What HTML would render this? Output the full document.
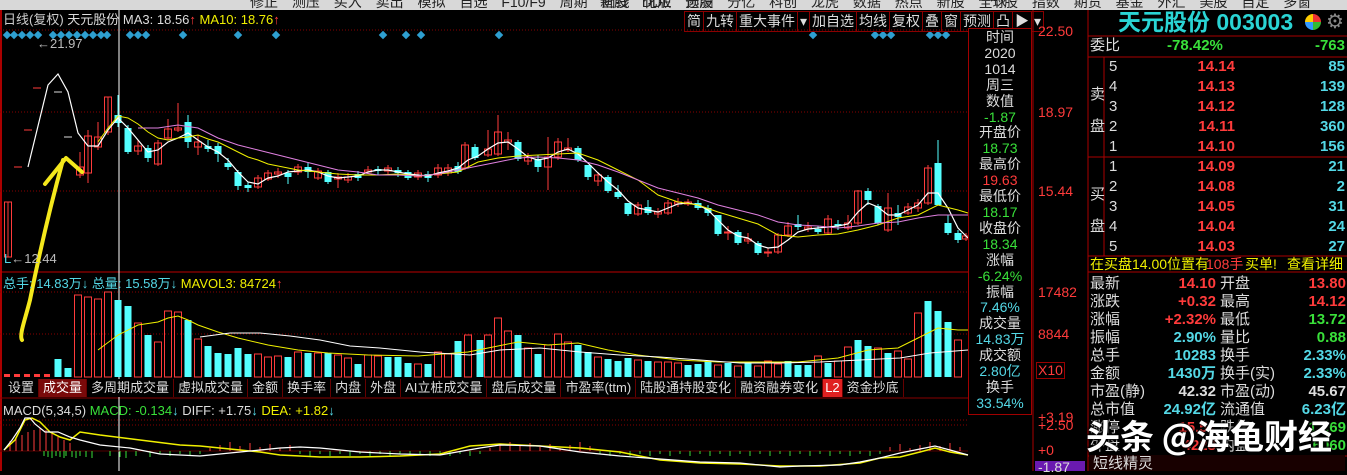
<!DOCTYPE html>
<html><head><meta charset="utf-8">
<style>
*{margin:0;padding:0;box-sizing:border-box}
body{width:1347px;height:471px;background:#000;overflow:hidden;position:relative;font-family:"Liberation Sans","Noto Sans CJK SC",sans-serif;}
.a{position:absolute;white-space:nowrap}
.tb{position:absolute;left:0;top:0;width:1347px;height:10px;background:#d8d8d8;overflow:hidden}
.tb span{position:absolute;top:-8px;font-size:14px;color:#222;word-spacing:10px}
.t{font-size:13px;line-height:15px}
.r{color:#ff3b3b}.g{color:#39e03a}.c{color:#54d8e6}.y{color:#f0f000}.w{color:#ddd}
.rp{position:absolute;left:1089px;width:258px;font-size:15px;line-height:18px}
.row{position:absolute;left:0;width:256px;height:18px}
.row span{position:absolute;top:0}
.tabs{position:absolute;left:4px;top:379px;height:18px;font-size:13px;line-height:18px}
.tabs span{display:inline-block;padding:0 4px;color:#ddd;border-right:1px solid #600;background:#000}
.tb2{position:absolute;left:684px;top:11px;height:19px;font-size:14px;line-height:19px;color:#ddd}
.tb2 span{display:inline-block;padding:0 2px;border:1px solid #8a0000;margin-right:-1px}
.pop{position:absolute;left:968px;top:28px;width:64px;height:387px;border:1px solid #a00000;background:#000;text-align:center;font-size:14px;line-height:15.9px;padding-top:1px}
</style></head><body>
<div class="tb">
<span style="left:250px">修正 测压 买入 卖出 模拟 自选 F10/F9 周期 画线 化版 选股</span>
<span style="left:600px">新股 DDE 预测 分亿 科创 龙虎 数据 热点 新股 全球</span>
<span style="left:990px">个股 指数 期货 基金 外汇 美股 自定 多窗</span>
</div>
<svg class="a" style="left:0;top:0" width="1347" height="471" id="sv"></svg>
<div class="a t" style="left:3px;top:12px;color:#ccc">日线(复权) <span class="w">天元股份</span> <span class="w">MA3: 18.56</span><span class="r">↑</span> <span class="y">MA10: 18.76</span><span class="r">↑</span></div>
<div class="a t" style="left:37px;top:36px;color:#bbb">←21.97</div>
<div class="a t" style="left:4px;top:251px;color:#bbb"><span class="c">L</span>←12.44</div>
<div class="a t" style="left:3px;top:276px"><span class="c">总手: 14.83万</span><span class="c">↓</span> <span class="c">总量: 15.58万↓</span> <span class="y">MAVOL3: 84724</span><span class="r">↑</span></div>
<div class="a t" style="left:3px;top:403px"><span class="w">MACD(5,34,5)</span> <span class="g">MACD: -0.134</span><span class="c">↓</span> <span class="w">DIFF: +1.75</span><span class="c">↓</span> <span class="y">DEA: +1.82</span><span class="c">↓</span></div>
<div class="tb2"><span>简</span><span>九转</span><span>重大事件</span><span>▾</span><span>加自选</span><span>均线</span><span>复权</span><span>叠</span><span>窗</span><span>预测</span><span>凸</span><span>▶</span><span>▾</span></div>
<div class="tabs"><span>设置</span><span style="background:#7a0a0a;color:#fff">成交量</span><span>多周期成交量</span><span>虚拟成交量</span><span>金额</span><span>换手率</span><span>内盘</span><span>外盘</span><span>AI立桩成交量</span><span>盘后成交量</span><span>市盈率(ttm)</span><span>陆股通持股变化</span><span>融资融券变化</span><span style="background:#e02020;color:#fff;padding:0 2px">L2</span><span>资金抄底</span></div>
<div class="pop">
<div class="w">时间</div><div class="w">2020</div><div class="w">1014</div><div class="w">周三</div><div class="w">数值</div><div class="g">-1.87</div>
<div class="w">开盘价</div><div class="g">18.73</div><div class="w">最高价</div><div class="r">19.63</div><div class="w">最低价</div><div class="g">18.17</div><div class="w">收盘价</div><div class="g">18.34</div>
<div class="w">涨幅</div><div class="g">-6.24%</div><div class="w">振幅</div><div class="c">7.46%</div><div class="w">成交量</div><div class="c">14.83万</div><div class="w">成交额</div><div class="c">2.80亿</div><div class="w">换手</div><div class="c">33.54%</div>
</div>
<div class="a t r" style="left:1038px;top:24px;font-size:14px">22.50</div>
<div class="a t r" style="left:1038px;top:105px;font-size:14px">18.97</div>
<div class="a t r" style="left:1038px;top:184px;font-size:14px">15.44</div>
<div class="a t r" style="left:1038px;top:285px;font-size:14px">17482</div>
<div class="a t r" style="left:1038px;top:327px;font-size:14px">8844</div>
<div class="a t r" style="left:1036px;top:362px;font-size:14px;border:1px solid #900;padding:0 1px">X10</div>
<div class="a t r" style="left:1038px;top:410px;font-size:14px">+3.19</div>
<div class="a t r" style="left:1038px;top:418px;font-size:14px">+2.50</div>
<div class="a t r" style="left:1038px;top:443px;font-size:14px">+0</div>
<div class="a t" style="left:1035px;top:461px;width:50px;height:10px;background:#6a1ab0;color:#ddd;font-size:14px;line-height:13px;padding-left:3px">-1.87</div>
<div class="a" style="left:1118px;top:9px;font-size:23px;color:#2ad4d4;font-weight:bold;line-height:26px">天元股份 003003</div>
<div class="a" style="left:1305px;top:14px;width:16px;height:16px;border-radius:50%;background:conic-gradient(#e33 0 25%,#3b3 0 50%,#39f 0 75%,#fc0 0)"></div>
<div class="a" style="left:1326px;top:9px;font-size:20px;color:#888">⚙</div>
<div class="rp" style="top:0">
<div class="row" style="top:37px"><span class="w" style="left:1px">委比</span><span class="g" style="left:78px;font-weight:bold">-78.42%</span><span class="g" style="right:0;font-weight:bold">-763</span></div>
<div class="a w" style="left:1px;top:86px">卖</div><div class="a w" style="left:1px;top:118px">盘</div>
<div class="a w" style="left:1px;top:186px">买</div><div class="a w" style="left:1px;top:218px">盘</div>
</div>
<div id="ob"></div>
<div class="rp" style="top:0">
<div class="row" style="top:255px;font-size:14px"><span class="y" style="left:1px">在买盘14.00位置有</span><span class="r" style="left:117px">108手</span><span class="y" style="left:156px">买单!</span><span class="y" style="right:2px">查看详细</span></div>
</div>
<div id="st"></div>
<div class="rp" style="top:0"><div class="row" style="top:455px;height:16px;background:#180000"><span class="w" style="left:4px">短线精灵</span></div></div>
<div class="a" style="left:1086px;top:410px;font-size:34px;font-weight:bold;color:#fff;text-shadow:0 0 2px #000,1px 1px 2px #000,-1px -1px 2px #000;font-family:'Noto Sans CJK SC',sans-serif">头条 @海龟财经</div>
<script>
var S='';
function L(x1,y1,x2,y2,c,w,d){S+='<line x1="'+x1+'" y1="'+y1+'" x2="'+x2+'" y2="'+y2+'" stroke="'+c+'" stroke-width="'+(w||1)+'"'+(d?' stroke-dasharray="'+d+'"':'')+'/>';}
function R(x,y,w,h,c,f){S+='<rect x="'+x+'" y="'+y+'" width="'+w+'" height="'+Math.max(h,1)+'" '+(f?'fill="'+c+'"':'fill="none" stroke="'+c+'"')+'/>';}
function P(pts,c,w){S+='<polyline points="'+pts+'" fill="none" stroke="'+c+'" stroke-width="'+(w||1)+'"/>';}
var RD='#ff3b3b',CY='#54ffff';
L(1,10,1,471,'#a00',2);
L(0,30,968,30,'#800',1,'1 2');
L(0,112,968,112,'#800',1,'1 2');L(0,191,968,191,'#800',1,'1 2');
L(0,272,968,272,'#b00',1);
L(0,292,968,292,'#800',1,'1 2');L(0,334,968,334,'#800',1,'1 2');
L(0,398,968,398,'#800',1);L(0,420,968,420,'#800',1,'1 2');L(0,425,968,425,'#800',1,'1 2');
L(1033,10,1033,471,'#a00',1);L(1088,10,1088,471,'#a00',1);
L(1088,36,1347,36,'#a00',1);L(1088,57,1347,57,'#a00',1);L(1088,157,1347,157,'#a00',1);L(1088,256,1347,256,'#a00',1);L(1088,272,1347,272,'#a00',1);L(1104,57,1104,256,'#a00',1);L(1088,456,1347,456,'#a00',1);
[7,14,22,30,38,53,61,69,77,85,93,101,107,130,138,146,183,238,276,383,406,421,499,813,875,883,891,930,938,946].forEach(function(x){S+='<rect x="'+(x-3)+'" y="32" width="6" height="6" fill="#2e9fd0" transform="rotate(45 '+x+' 35)"/>';});
var C=[[8,202,257,202,257,'r'],[80,167,175,152,178,'r'],[88,136,173,130,183,'r'],[98,137,147,122,150,'r'],[108,97,132,97,135,'r'],[118,115,123,95,127,'c'],[128,128,152,125,154,'c'],[138,146,151,140,155,'r'],[148,148,158,145,162,'c'],[158,143,164,140,166,'r'],[168,129,138,119,140,'r'],[178,128,130,103,132,'r'],[188,122,142,115,148,'c'],[198,142,147,135,155,'r'],[208,146,149,140,152,'c'],[218,146,154,143,162,'c'],[228,163,167,158,170,'c'],[238,172,186,170,190,'c'],[248,185,188,182,192,'c'],[258,178,187,175,189,'r'],[268,173,179,170,181,'r'],[278,172,174,168,178,'r'],[288,173,177,170,184,'c'],[298,167,172,164,175,'r'],[308,167,172,163,178,'c'],[318,171,178,168,180,'r'],[328,172,182,170,184,'c'],[338,177,179,173,188,'r'],[348,177,180,173,183,'r'],[358,174,178,171,181,'c'],[368,170,172,166,174,'r'],[378,169,171,166,175,'c'],[388,168,171,165,174,'r'],[398,170,173,167,177,'c'],[408,172,178,170,180,'c'],[418,173,177,170,180,'r'],[428,174,178,171,182,'c'],[438,168,175,164,178,'r'],[448,168,173,164,176,'r'],[458,166,172,162,174,'c'],[465,145,168,142,170,'r'],[475,147,158,144,160,'c'],[488,149,155,130,157,'r'],[498,132,154,115,156,'r'],[508,140,142,132,150,'r'],[518,142,159,140,161,'c'],[528,157,161,153,165,'r'],[538,159,167,155,172,'c'],[548,157,167,137,190,'r'],[558,142,157,138,160,'r'],[568,148,150,138,152,'r'],[578,148,160,146,162,'c'],[588,165,177,165,180,'c'],[598,175,181,172,186,'r'],[608,177,191,175,193,'c'],[618,192,197,185,199,'c'],[628,203,214,203,216,'c'],[638,205,214,202,216,'r'],[648,207,213,200,215,'c'],[658,212,214,208,218,'r'],[668,203,213,200,215,'r'],[678,202,204,198,207,'r'],[688,202,204,199,206,'r'],[698,203,208,200,210,'c'],[708,208,213,205,216,'c'],[718,215,234,215,236,'c'],[728,232,233,226,240,'r'],[738,232,243,230,245,'c'],[748,239,241,233,244,'r'],[758,243,253,241,255,'c'],[768,252,253,248,257,'r'],[778,235,252,233,254,'r'],[788,226,235,222,237,'r'],[798,224,227,215,230,'c'],[808,227,229,222,232,'r'],[818,229,232,226,234,'c'],[828,219,233,215,235,'r'],[838,224,226,220,230,'c'],[848,223,228,215,230,'r'],[858,191,223,190,225,'r'],[868,191,200,188,205,'c'],[878,206,223,204,225,'c'],[888,208,230,193,232,'r'],[898,213,217,205,225,'c'],[908,207,213,203,215,'r'],[918,203,208,199,212,'r'],[928,168,203,165,205,'r'],[938,163,205,140,205,'c'],[948,223,233,215,235,'c'],[958,233,240,230,243,'c'],[966,236,239,233,241,'r']];
C.forEach(function(k){var c=k[5]=='r'?RD:CY;L(k[0],k[3],k[0],k[4],c);if(k[5]=='r'){R(k[0]-3.5,k[1],7,k[2]-k[1],c,0);}else R(k[0]-3.5,k[1],7,k[2]-k[1],c,1);});
[[37,88],[28,130],[18,167],[58,92],[68,137]].forEach(function(d){L(d[0]-4,d[1],d[0]+4,d[1],d[0]>50?'#ddd':RD);});
P('28,167 48,85 58,74 68,92 78,133 88,146 98,146 108,130 118,118 128,128 138,140 148,152 158,150 168,142 178,138 188,133 198,140 208,147 218,152 228,160 238,172 248,182 258,184 268,178 278,176 288,172 298,171 308,170 318,172 328,176 338,178 348,177 358,176 368,172 378,170 388,170 398,172 408,174 418,175 428,176 438,173 448,171 458,168 468,160 478,156 488,149 498,143 508,142 518,149 528,157 538,160 548,158 558,152 568,149 578,154 588,163 598,173 608,182 618,190 628,201 638,208 648,210 658,212 668,208 678,204 688,203 698,205 708,210 718,220 728,230 738,236 748,238 758,245 768,248 778,247 788,240 798,232 808,229 818,228 828,227 838,226 848,224 858,212 868,203 878,207 888,215 898,215 908,210 918,205 928,193 938,193 948,208 958,228 968,238','#fff',1.2);
P('98,142 108,128 118,116 128,118 138,124 148,132 158,138 168,140 178,138 188,137 198,135 208,139 218,142 228,147 238,152 248,157 258,160 268,164 278,166 288,168 298,170 318,172 338,174 358,175 378,175 398,174 418,176 438,174 458,172 478,162 498,158 518,156 538,155 558,154 578,153 598,160 618,170 638,180 658,195 678,202 698,205 718,212 738,218 758,224 778,235 798,237 818,235 838,234 858,230 878,225 898,218 918,215 938,205 958,210 968,213','#f0f000',1);
P('138,128 158,128 178,125 198,128 218,138 238,145 258,150 278,155 298,160 318,165 338,170 358,172 378,175 398,175 418,176 438,174 458,170 478,166 498,162 518,158 538,157 558,158 578,160 598,165 618,172 638,180 658,188 678,193 698,198 718,205 738,210 758,215 778,222 798,225 818,226 838,228 858,226 878,223 898,222 918,218 938,215 958,215 968,215','#e080e0',1);
L(119,10,119,471,'#fff',1);
var V=[[58,359,'c'],[68,368,'c'],[78,295,'r'],[88,297,'r'],[98,299,'r'],[108,292,'r'],[118,300,'c'],[128,306,'c'],[138,323,'r'],[148,335,'c'],[158,342,'r'],[168,311,'r'],[178,312,'r'],[188,320,'c'],[198,339,'r'],[208,346,'c'],[218,353,'c'],[228,354,'c'],[238,348,'c'],[248,354,'c'],[258,354,'r'],[268,357,'r'],[278,356,'r'],[288,357,'c'],[298,352,'r'],[308,353,'c'],[318,353,'r'],[328,353,'c'],[338,355,'r'],[348,358,'r'],[358,364,'c'],[368,355,'r'],[378,356,'r'],[388,357,'c'],[398,357,'c'],[408,363,'c'],[418,364,'r'],[428,364,'c'],[438,352,'r'],[448,354,'r'],[458,341,'c'],[468,335,'r'],[480,340,'c'],[488,335,'r'],[498,318,'r'],[508,331,'r'],[518,335,'c'],[528,348,'r'],[538,354,'c'],[548,345,'r'],[558,334,'r'],[568,342,'r'],[578,345,'c'],[588,352,'c'],[598,357,'r'],[608,359,'c'],[618,361,'c'],[628,358,'c'],[638,360,'r'],[648,361,'c'],[658,362,'r'],[668,362,'r'],[678,363,'r'],[688,365,'c'],[698,364,'c'],[708,361,'c'],[718,365,'r'],[728,363,'c'],[738,366,'r'],[748,362,'c'],[758,366,'r'],[768,361,'r'],[778,364,'r'],[788,361,'c'],[798,365,'c'],[808,365,'c'],[818,356,'r'],[828,363,'c'],[838,361,'r'],[848,347,'r'],[858,340,'c'],[868,346,'c'],[878,348,'r'],[888,353,'c'],[898,351,'r'],[908,359,'r'],[918,313,'r'],[928,301,'c'],[938,311,'c'],[948,322,'c'],[958,340,'r']];
V.forEach(function(v){if(v[2]=='c')R(v[0]-3.5,v[1],7,377-v[1],CY,1);else R(v[0]-3.5,v[1],7,377-v[1],RD,0);});
[4,14,24,34,44].forEach(function(x){R(x,374,6,3,RD,1);});
P('98,350 118,335 138,325 158,322 168,318 178,316 188,320 198,325 218,332 238,338 268,345 298,350 328,353 368,355 418,356 468,352 498,346 518,342 548,345 578,343 608,350 638,355 678,360 718,362 758,362 798,362 838,358 868,350 898,348 918,338 938,328 958,330 968,330','#f0f000',1);
P('200,337 230,333 260,333 290,336 320,340 350,346 380,348 420,352 470,355 500,350 540,348 580,352 620,355 660,357 700,360 740,363 780,363 820,362 860,360 900,358 930,353 968,350','#fff',1);
L(0,451,968,451,'#500',1);
var hx=[[10,441],[16,438],[22,435],[28,432],[34,430],[40,428],[46,430],[52,432],[58,437],[64,440],[70,443]];
hx.forEach(function(h){L(h[0],451,h[0],h[1],RD);});
[44,48,52,56,60,64,66,72,76,80,86,92,110,120,126,136,150].forEach(function(x,i){L(x+0,451,x+0,456+(i%3),'#39e03a');});
for(var x=160;x<968;x+=10){var up=(x>200&&x<300)||(x>480&&x<600)||(x>880);L(x,451,x,up?448-(x%7):454+(x%4),up?RD:'#39e03a');}
P('4,450 15,440 25,420 32,418 40,422 50,432 60,437 70,440 80,432 100,435 140,440 180,445 200,446 240,450 260,452 280,455 320,457 360,457 400,456 440,454 470,446 500,444 540,446 580,448 620,452 660,460 700,463 740,464 780,466 820,466 860,463 880,458 900,457 920,452 935,448 950,452 968,455','#f0f000',1.5);
P('4,450 12,440 20,428 25,418 30,418 35,424 45,432 58,432 70,437 80,440 100,445 130,448 140,450 160,454 200,456 240,452 260,450 280,448 300,447 320,448 360,452 400,454 440,455 480,448 500,445 540,446 580,452 620,456 660,459 700,462 740,463 780,467 800,466 840,465 860,462 880,458 900,453 920,449 935,446 950,450 968,455','#fff',1.2);
S+='<path d="M22,340 C19,335 25,320 30,300 C40,250 52,200 63,160" fill="none" stroke="#f4e81c" stroke-width="4" stroke-linecap="round"/>';
S+='<path d="M45,184 L66,158 L82,172" fill="none" stroke="#f4e81c" stroke-width="4" stroke-linecap="round" stroke-linejoin="round"/>';
document.getElementById('sv').innerHTML=S;
var ob='',sp=[['5','14.14','85'],['4','14.13','139'],['3','14.12','128'],['2','14.11','360'],['1','14.10','156'],['1','14.09','21'],['2','14.08','2'],['3','14.05','31'],['4','14.04','24'],['5','14.03','27']];
sp.forEach(function(s,i){var y=58+i*20;ob+='<div class="a" style="left:1109px;top:'+y+'px;font-size:15px;line-height:18px;color:#ddd;width:236px"><span>'+s[0]+'</span><span class="r" style="position:absolute;right:110px;font-weight:bold">'+s[1]+'</span><span class="c" style="position:absolute;right:0;font-weight:bold">'+s[2]+'</span></div>';});
document.getElementById('ob').innerHTML=ob;
var st=[['最新','14.10','r','开盘','13.80','r'],['涨跌','+0.32','r','最高','14.12','r'],['涨幅','+2.32%','r','最低','13.72','g'],['振幅','2.90%','c','量比','0.88','g'],['总手','10283','c','换手','2.33%','c'],['金额','1430万','c','换手(实)','2.33%','c'],['市盈(静)','42.32','w','市盈(动)','45.67','w'],['总市值','24.92亿','c','流通值','6.23亿','c'],['涨停','15.51','r','跌停','12.69','g'],['外盘','4223','r','内盘','6060','g']];
var h='';st.forEach(function(s,i){var y=275+i*18;h+='<div class="a" style="left:1090px;top:'+y+'px;width:256px;height:18px;font-size:15px;line-height:18px"><span class="w" style="position:absolute;left:0">'+s[0]+'</span><span class="'+s[2]+'" style="position:absolute;right:130px;font-weight:bold">'+s[1]+'</span><span class="w" style="position:absolute;left:130px">'+s[3]+'</span><span class="'+s[5]+'" style="position:absolute;right:0;font-weight:bold">'+s[4]+'</span></div>';});
document.getElementById('st').innerHTML=h;
</script>
</body></html>
